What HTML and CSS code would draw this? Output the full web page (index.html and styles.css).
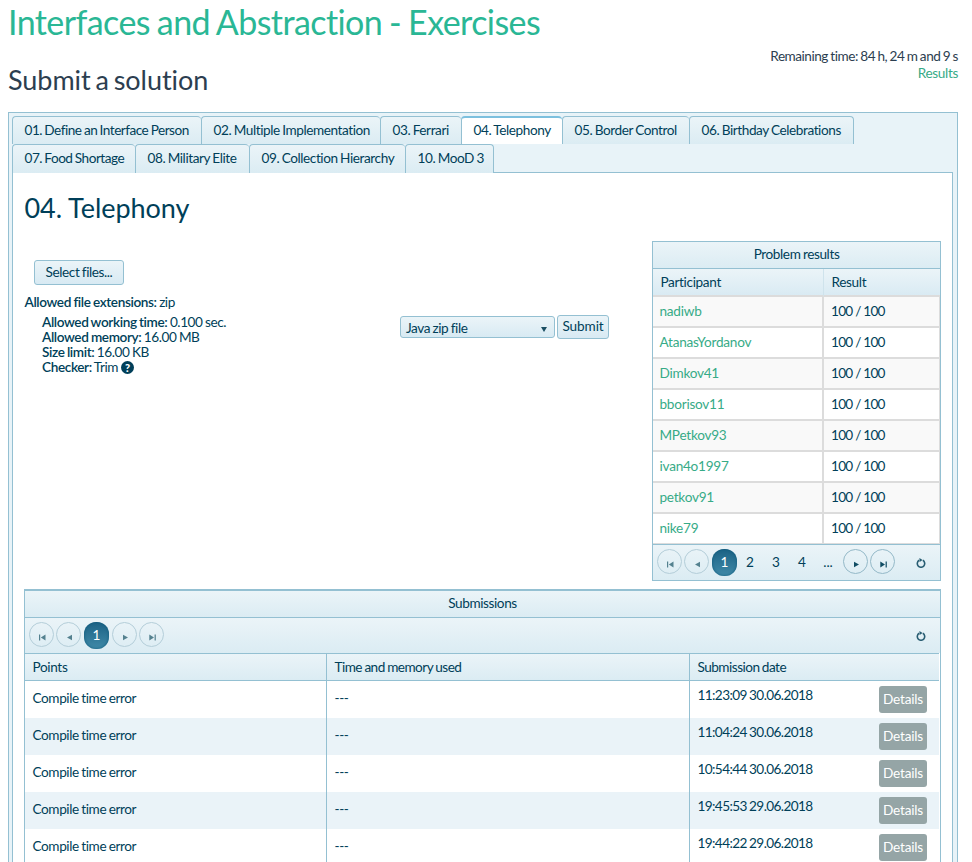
FILE: index.html
```html
<!DOCTYPE html>
<html lang="en">
<head>
<meta charset="utf-8">
<title>Interfaces and Abstraction - Exercises</title>
<link rel="stylesheet" href="styles.css">
</head>
<body>
<svg class="defs" width="0" height="0">
  <symbol id="first" viewBox="0 0 7 7"><path d="M0 .5h1.2v6H0zM6.5.5v6L1.8 3.5z"/></symbol>
  <symbol id="prev" viewBox="0 0 7 7"><path d="M6 .7v5.6L1 3.5z"/></symbol>
  <symbol id="next" viewBox="0 0 7 7"><path d="M1 .7v5.6l5-2.8z"/></symbol>
  <symbol id="last" viewBox="0 0 7 7"><path d="M5.6.5h1.2v6H5.6zM.3.5v6L5 3.5z"/></symbol>
  <symbol id="reload" viewBox="0 0 10 10"><path d="M6.8 2.3A3.7 3.7 0 1 1 3.2 2.3" fill="none" stroke="currentColor" stroke-width="1.6"/><path d="M3.4 0 6.6 1.9 3.6 4z"/></symbol>
</svg>
<h1>Interfaces and Abstraction - Exercises</h1>
<header class="top">
  <h2>Submit a solution</h2>
  <div class="info"><div>Remaining time: 84 h, 24 m and 9 s</div><a>Results</a></div>
</header>
<main class="tabstrip">
  <ul class="tabs row1">
    <li>01. Define an Interface Person</li><li>02. Multiple Implementation</li><li>03. Ferrari</li><li class="active">04. Telephony</li><li>05. Border Control</li><li class="end">06. Birthday Celebrations</li>
  </ul>
  <ul class="tabs row2">
    <li>07. Food Shortage</li><li>08. Military Elite</li><li>09. Collection Hierarchy</li><li class="end">10. MooD 3</li>
  </ul>
  <section class="content">
    <h3>04. Telephony</h3>
    <div class="columns">
      <div class="details">
        <button class="btn select">Select files...</button>
        <p class="ext"><b>Allowed file extensions:</b> zip</p>
        <div class="limits">
          <div><b>Allowed working time:</b> 0.100 sec.</div>
          <div><b>Allowed memory:</b> 16.00 MB</div>
          <div><b>Size limit:</b> 16.00 KB</div>
          <div class="checker"><span><b>Checker:</b> Trim</span><i class="help">?</i></div>
        </div>
      </div>
      <div class="send">
        <div class="dropdown"><span>Java zip file</span><i class="caret"></i></div>
        <button class="btn submit">Submit</button>
      </div>
      <div class="grid results">
        <div class="bar title">Problem results</div>
        <div class="bar rrow head"><span>Participant</span><span>Result</span></div>
        <div class="rrow"><a>nadiwb</a><span>100 / 100</span></div>
        <div class="rrow"><a>AtanasYordanov</a><span>100 / 100</span></div>
        <div class="rrow"><a>Dimkov41</a><span>100 / 100</span></div>
        <div class="rrow"><a>bborisov11</a><span>100 / 100</span></div>
        <div class="rrow"><a>MPetkov93</a><span>100 / 100</span></div>
        <div class="rrow"><a>ivan4o1997</a><span>100 / 100</span></div>
        <div class="rrow"><a>petkov91</a><span>100 / 100</span></div>
        <div class="rrow"><a>nike79</a><span>100 / 100</span></div>
        <div class="pager">
          <span class="pg off"><svg><use href="#first"/></svg></span><span class="pg off"><svg><use href="#prev"/></svg></span><span class="cur">1</span><span class="nums"><span>2</span><span>3</span><span>4</span><span>...</span></span><span class="pg"><svg><use href="#next"/></svg></span><span class="pg"><svg><use href="#last"/></svg></span>
          <svg class="reload"><use href="#reload"/></svg>
        </div>
      </div>
    </div>
    <div class="grid subs">
      <div class="bar title">Submissions</div>
      <div class="pager">
        <span class="pg off"><svg><use href="#first"/></svg></span><span class="pg off"><svg><use href="#prev"/></svg></span><span class="cur">1</span><span class="pg off"><svg><use href="#next"/></svg></span><span class="pg off"><svg><use href="#last"/></svg></span>
        <svg class="reload"><use href="#reload"/></svg>
      </div>
      <div class="bar srow head"><span>Points</span><span>Time and memory used</span><span>Submission date</span></div>
      <div class="srow"><span>Compile time error</span><span>---</span><span class="date"><time>11:23:09 30.06.2018</time><a class="more">Details</a></span></div>
      <div class="srow"><span>Compile time error</span><span>---</span><span class="date"><time>11:04:24 30.06.2018</time><a class="more">Details</a></span></div>
      <div class="srow"><span>Compile time error</span><span>---</span><span class="date"><time>10:54:44 30.06.2018</time><a class="more">Details</a></span></div>
      <div class="srow"><span>Compile time error</span><span>---</span><span class="date"><time>19:45:53 29.06.2018</time><a class="more">Details</a></span></div>
      <div class="srow"><span>Compile time error</span><span>---</span><span class="date"><time>19:44:22 29.06.2018</time><a class="more">Details</a></span></div>
    </div>
  </section>
</main>
</body>
</html>
```
FILE: styles.css
```css
* { box-sizing: border-box; }
html { overflow: hidden; }
body { margin: 0; padding: 0 14px 0 8px; height: 862px; overflow: hidden; background: #fff; font: 13.6px/20px Lato, "Liberation Sans", sans-serif; color: #003f59; letter-spacing: -0.42px; word-spacing: -0.6px; }
.defs { display: block; }
h1, h2, h3, p, ul { margin: 0; padding: 0; font-weight: 400; }
h1 { height: 44px; font-size: 34px; line-height: 44px; color: #2ab795; letter-spacing: -0.58px; word-spacing: -1.2px; }
.top { display: flex; justify-content: space-between; height: 68px; color: #2c3e50; }
h2 { padding-top: 18px; font-size: 27px; line-height: 36px; letter-spacing: -0.05px; word-spacing: -2px; }
.info { padding-top: 4px; line-height: 17px; text-align: right; letter-spacing: -0.48px; }
.info a { letter-spacing: -0.35px; }
a { color: #37ab87; }
.tabstrip { width: 950px; height: 760px; padding: 3px 4px 0 3px; border: 1px solid #94c0d2; background: #e8f3f8; }
.tabs { display: grid; list-style: none; height: 28px; }
.row1 { grid-template-columns: 189px 179px 81px 101px 127px 165px; }
.row2 { grid-template-columns: 123px 114px 156px 89px; height: 29px; position: relative; z-index: 1; }
.tabs li { padding-left: 11.5px; border: solid #94c0d2; border-width: 1px 0 0 1px; border-radius: 4px 4px 0 0; background: linear-gradient(#ebf4f8, #dbecf3); line-height: 26px; white-space: nowrap; }
.tabs li.end { border-right-width: 1px; }
.tabs li:first-child { letter-spacing: -0.5px; }
.tabs li.active { background: #fff; border-top: 2px solid #7cc0de; line-height: 24px; }
.content { height: 720px; margin-top: -1px; padding: 16px 11px 0 11px; border: 1px solid #94c0d2; background: #fff; }
h3 { padding-left: 0.5px; font-size: 27px; line-height: 38px; letter-spacing: -0.05px; word-spacing: 0; }
.columns { display: flex; height: 362px; padding-top: 14px; }
.details { width: 375px; padding-top: 19px; }
.btn { display: block; margin: 0; padding: 0 0 2px; border: 1px solid #94c0d2; border-radius: 3px; background: linear-gradient(#ebf4f8, #d8eaf3); font: inherit; color: #003f59; letter-spacing: inherit; word-spacing: inherit; }
.select { width: 90px; height: 25px; margin-left: 10px; }
.ext { margin-top: 7px; padding-left: 0.5px; }
.limits { padding: 3px 0 0 18px; line-height: 15px; }
.limits > div { height: 15px; }
b { font-weight: 600; letter-spacing: -0.38px; }
.checker { display: flex; align-items: center; gap: 3px; }
.help { width: 13px; height: 13px; border-radius: 50%; background: #003f59; color: #fff; font: 900 11px/13px Lato, sans-serif; text-align: center; letter-spacing: 0; }
.send { display: flex; width: 253px; padding-top: 74px; }
.dropdown { display: flex; justify-content: space-between; align-items: center; width: 155px; height: 22px; margin: 1px 2px 0 1px; padding: 2px 7px 0 5px; border: 1px solid #94c0d2; border-radius: 3px; background: linear-gradient(#ebf4f8, #d8eaf3); }
.caret { margin-top: 3px; border: solid transparent; border-width: 5px 3px 0; border-top-color: #1b4f63; }
.submit { width: 52px; height: 24px; letter-spacing: -0.1px; }
.grid { border: 1px solid #94c0d2; letter-spacing: -0.4px; }
.results { width: 289px; height: 340px; }
.bar { background: linear-gradient(#ebf4f8, #dbecf3); }
.title { height: 27px; line-height: 24px; text-align: center; border-bottom: 1px solid #94c0d2; }
.rrow { display: grid; grid-template-columns: 171px 116px; height: 31px; line-height: 28px; }
.rrow > * { padding-left: 6.5px; border: solid #dcdcdc; border-width: 0 2px 2px 0; }
.rrow > a { letter-spacing: -0.25px; }
.rrow > :last-child { padding-left: 7px; border-right-width: 1px; letter-spacing: -0.75px; word-spacing: 0; }
.rrow:nth-child(odd) { background: #f9f9f9; }
.rrow.head { height: 28px; line-height: 26px; background: linear-gradient(#ebf4f8, #d8eaf3); }
.rrow.head > * { padding-left: 7.5px; border-right: 1px solid #cfe3ec; letter-spacing: -0.35px; }
.rrow.head > :last-child { border-right: 0; letter-spacing: -0.35px; }
.rrow:nth-child(10) > * { border-bottom-width: 1px; }
.rrow:nth-child(10) { height: 30px; }
.pager { display: flex; align-items: flex-start; height: 36px; padding: 4px 14px 0 4px; border-top: 1px solid #94c0d2; background: linear-gradient(#ebf4f8, #dbecf3); letter-spacing: 0; }
.pg { display: flex; justify-content: center; width: 25px; height: 25px; margin-right: 2px; padding: 11px 0 0 1px; border: 1px solid #94b9c8; border-radius: 50%; color: #104c63; }
.pg svg { width: 7px; height: 7px; fill: currentColor; }
.off { border-color: #b4ced9; color: #54818f; }
.cur { width: 25px; height: 27px; margin: 0 3px 0 1px; border-radius: 12px; background: linear-gradient(#1b6285, #408aa8); box-shadow: inset 0 0 3px #0d5879; color: #fff; line-height: 26px; text-align: center; }
.nums { display: grid; grid-template-columns: repeat(4, 26px); margin: 0 2px 0 -3px; line-height: 26px; text-align: center; }
.reload { width: 10px; height: 10px; margin: 9px 0 0 auto; fill: currentColor; color: #285d72; }
.subs { height: 290px; border-top-width: 2px; }
.subs .title { height: 27px; line-height: 24px; }
.subs .pager { height: 35px; border-top: 0; }
.srow { display: grid; grid-template-columns: 301px 363px 250px; height: 37px; line-height: 34px; }
.srow > * { padding-left: 7.5px; border-left: 1px solid #94c0d2; }
.srow > :first-child { border-left: 0; }
.srow:nth-child(odd) > * { background: #eaf3f8; }
.srow.head { height: 28px; line-height: 26px; background: none; }
.srow.head > * { border-top: 1px solid #94c0d2; border-bottom: 1px solid #94c0d2; background: linear-gradient(#ebf4f8, #dbecf3); letter-spacing: -0.52px; }
.srow.head > :first-child { letter-spacing: -0.35px; }
.date { display: flex; justify-content: space-between; padding-right: 12px; line-height: 28px; }
time { letter-spacing: -0.6px; }
.more { width: 48px; height: 27px; margin-top: 5px; border-radius: 3px; background: #95a5a6; color: #fff; text-align: center; line-height: 26px; letter-spacing: -0.2px; }
```
